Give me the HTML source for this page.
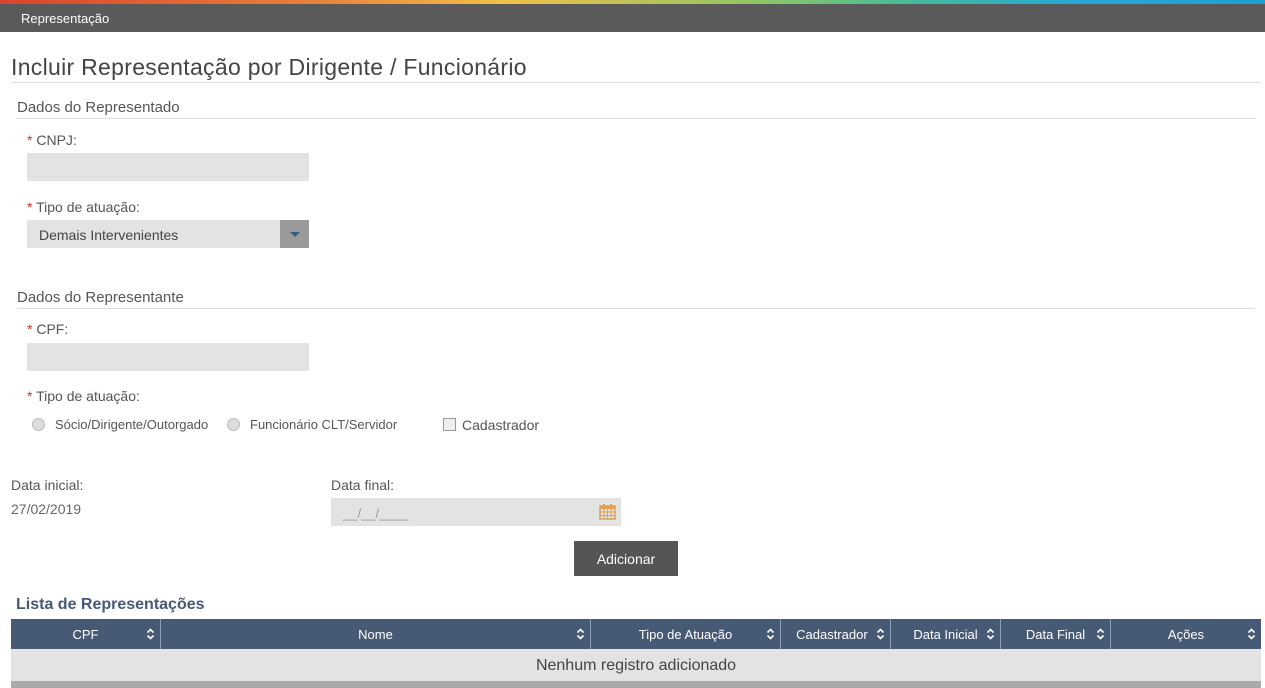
<!DOCTYPE html>
<html><head><meta charset="utf-8"><style>
body{margin:0;width:1265px;height:688px;overflow:hidden;background:#fff;font-family:"Liberation Sans",sans-serif;color:#555;position:relative}
.a{position:absolute}
.bar{left:0;top:0;width:1265px;height:4px;background:linear-gradient(90deg,#d9432e,#e8823a 25%,#f1c049 40%,#8fc565 60%,#45bb9a 72%,#27a8d6 85%,#1e9fd2)}
.hd{left:0;top:4px;width:1265px;height:28px;background:#5a5a5a;color:#fff;font-size:13px;line-height:29px;padding-left:21px;box-sizing:border-box}
.lbl{font-size:14px;color:#555}
.st{color:#c0392b}
.in{background:#e3e3e3;height:28px}
.hr{height:1px;background:#ddd}
.sec{font-size:15px;color:#555}
.rad{width:11px;height:11px;border-radius:50%;background:#ddd;border:1px solid #bbb}
.th{top:619px;height:30px;background:#465a75;color:#fff;font-size:13px;font-weight:normal;line-height:31px;text-align:center;border-right:1px solid #8da0b8;box-sizing:border-box}
.th svg{position:absolute;right:5px;top:9px}
</style></head><body>
<div class="a bar"></div>
<div class="a hd">Representação</div>
<div class="a" style="left:11px;top:54px;font-size:23px;color:#444;letter-spacing:0.3px">Incluir Representação por Dirigente / Funcionário</div>
<div class="a hr" style="left:11px;top:82px;width:1250px"></div>
<div class="a sec" style="left:17px;top:99px">Dados do Representado</div>
<div class="a hr" style="left:17px;top:118px;width:1238px"></div>
<div class="a lbl" style="left:27px;top:132px"><span class="st">*</span> CNPJ:</div>
<div class="a in" style="left:27px;top:153px;width:282px"></div>
<div class="a lbl" style="left:27px;top:199px"><span class="st">*</span> Tipo de atuação:</div>
<div class="a in" style="left:27px;top:220px;width:282px;font-size:14px;line-height:30px;color:#444"><span style="padding-left:12px">Demais Intervenientes</span></div>
<div class="a" style="left:280px;top:220px;width:29px;height:28px;background:#9a9a9a"><div style="margin:12px auto 0;width:0;height:0;border-left:5px solid transparent;border-right:5px solid transparent;border-top:5px solid #3a5a80"></div></div>
<div class="a sec" style="left:17px;top:289px">Dados do Representante</div>
<div class="a hr" style="left:17px;top:308px;width:1238px"></div>
<div class="a lbl" style="left:27px;top:321px"><span class="st">*</span> CPF:</div>
<div class="a in" style="left:27px;top:343px;width:282px"></div>
<div class="a lbl" style="left:27px;top:388px"><span class="st">*</span> Tipo de atuação:</div>
<div class="a rad" style="left:32px;top:418px"></div>
<div class="a" style="left:55px;top:417px;font-size:13px">Sócio/Dirigente/Outorgado</div>
<div class="a rad" style="left:227px;top:418px"></div>
<div class="a" style="left:250px;top:417px;font-size:13px">Funcionário CLT/Servidor</div>
<div class="a" style="left:443px;top:418px;width:11px;height:11px;border:1px solid #999;background:#eee"></div>
<div class="a" style="left:462px;top:417px;font-size:14px">Cadastrador</div>
<div class="a lbl" style="left:11px;top:477px">Data inicial:</div>
<div class="a lbl" style="left:11px;top:501px;color:#666">27/02/2019</div>
<div class="a lbl" style="left:331px;top:477px">Data final:</div>
<div class="a in" style="left:331px;top:498px;width:290px;color:#999;font-size:13px;line-height:32px"><span style="padding-left:12px">__/__/____</span></div>
<svg class="a" style="left:599px;top:503px" width="17" height="17" viewBox="0 0 17 17"><rect x="1" y="3" width="15" height="13" fill="none" stroke="#e0a050" stroke-width="1.5"/><rect x="1" y="3" width="15" height="3" fill="#e0a050"/><path d="M1 9H16M1 12.5H16M5 6V16M8.5 6V16M12 6V16" stroke="#e0a050"/><rect x="4" y="1" width="2" height="3" fill="#e0a050"/><rect x="11" y="1" width="2" height="3" fill="#e0a050"/></svg>
<div class="a" style="left:574px;top:541px;width:104px;height:35px;background:#555;color:#fff;font-size:14px;line-height:36px;text-align:center">Adicionar</div>
<div class="a" style="left:16px;top:596px;font-size:16px;font-weight:bold;color:#465a75">Lista de Representações</div>
<div class="a th" style="left:11px;width:150px">CPF<svg width="9" height="12" viewBox="0 0 9 12"><path d="M1.5 4.5L4.5 1.5L7.5 4.5M1.5 7.5L4.5 10.5L7.5 7.5" fill="none" stroke="#fff" stroke-width="1.6"/></svg></div>
<div class="a th" style="left:161px;width:430px">Nome<svg width="9" height="12" viewBox="0 0 9 12"><path d="M1.5 4.5L4.5 1.5L7.5 4.5M1.5 7.5L4.5 10.5L7.5 7.5" fill="none" stroke="#fff" stroke-width="1.6"/></svg></div>
<div class="a th" style="left:591px;width:190px">Tipo de Atuação<svg width="9" height="12" viewBox="0 0 9 12"><path d="M1.5 4.5L4.5 1.5L7.5 4.5M1.5 7.5L4.5 10.5L7.5 7.5" fill="none" stroke="#fff" stroke-width="1.6"/></svg></div>
<div class="a th" style="left:781px;width:110px">Cadastrador&nbsp;&nbsp;<svg width="9" height="12" viewBox="0 0 9 12"><path d="M1.5 4.5L4.5 1.5L7.5 4.5M1.5 7.5L4.5 10.5L7.5 7.5" fill="none" stroke="#fff" stroke-width="1.6"/></svg></div>
<div class="a th" style="left:891px;width:110px">Data Inicial<svg width="9" height="12" viewBox="0 0 9 12"><path d="M1.5 4.5L4.5 1.5L7.5 4.5M1.5 7.5L4.5 10.5L7.5 7.5" fill="none" stroke="#fff" stroke-width="1.6"/></svg></div>
<div class="a th" style="left:1001px;width:110px">Data Final<svg width="9" height="12" viewBox="0 0 9 12"><path d="M1.5 4.5L4.5 1.5L7.5 4.5M1.5 7.5L4.5 10.5L7.5 7.5" fill="none" stroke="#fff" stroke-width="1.6"/></svg></div>
<div class="a th" style="left:1111px;width:150px;border-right:none">Ações<svg width="9" height="12" viewBox="0 0 9 12"><path d="M1.5 4.5L4.5 1.5L7.5 4.5M1.5 7.5L4.5 10.5L7.5 7.5" fill="none" stroke="#fff" stroke-width="1.6"/></svg></div>
<div class="a" style="left:11px;top:649px;width:1250px;height:32px;background:#e3e3e3;text-align:center;font-size:16px;line-height:33px;color:#444">Nenhum registro adicionado</div>
<div class="a" style="left:11px;top:681px;width:1250px;height:7px;background:#aaa"></div>
</body></html>
